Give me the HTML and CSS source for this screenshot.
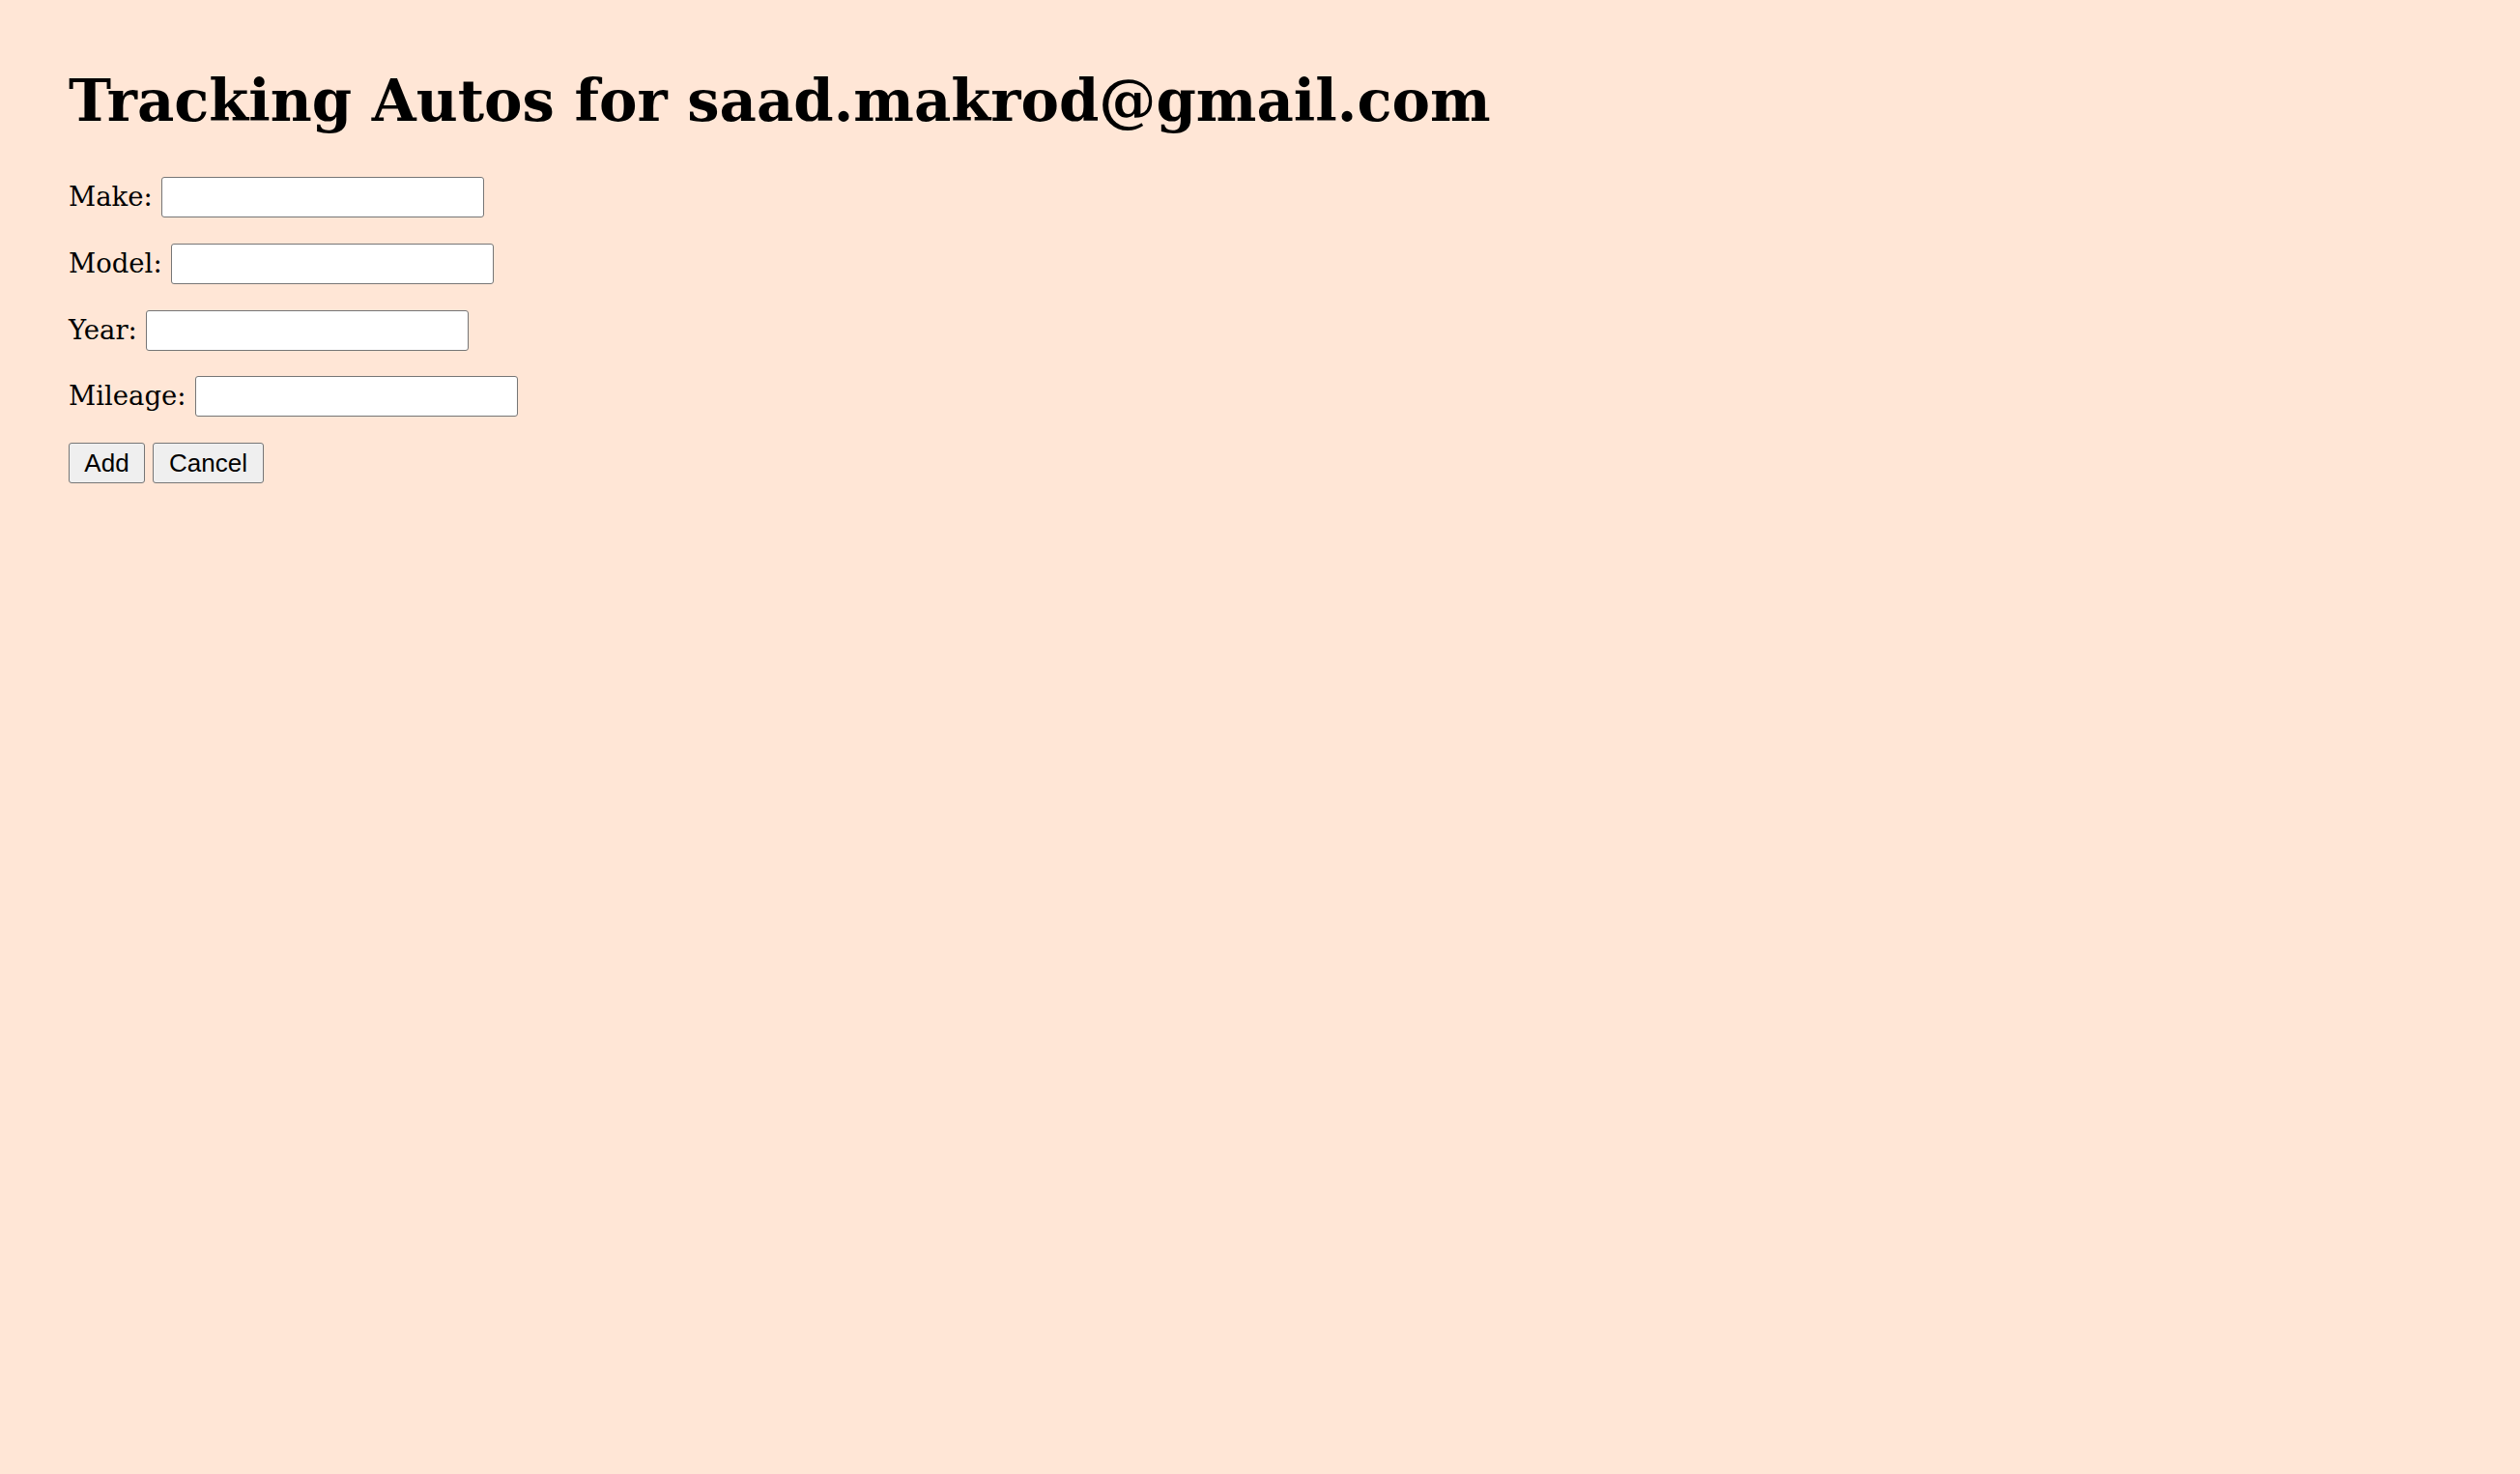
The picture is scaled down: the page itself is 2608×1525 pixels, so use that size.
FILE: index.html
```html
<!DOCTYPE html>
<html lang="en">
<head>
<meta charset="utf-8">
<title>Tracking Autos</title>
<link rel="stylesheet" href="styles.css">
</head>
<body>
<div class="page">
  <h1 class="title">Tracking Autos for saad.makrod@gmail.com</h1>
  <form class="auto-form">
    <div class="row"><label class="label" for="make">Make:</label><input class="field" type="text" id="make"></div>
    <div class="row"><label class="label" for="model">Model:</label><input class="field" type="text" id="model"></div>
    <div class="row"><label class="label" for="year">Year:</label><input class="field" type="text" id="year"></div>
    <div class="row"><label class="label" for="mileage">Mileage:</label><input class="field" type="text" id="mileage"></div>
    <div class="row buttons"><button class="btn btn-add" type="button">Add</button><button class="btn btn-cancel" type="button">Cancel</button></div>
  </form>
</div>
</body>
</html>
```

FILE: styles.css
```css
html, body {
  margin: 0;
  padding: 0;
  background: #ffe6d6;
  min-height: 100%;
}
body {
  font-family: "DejaVu Serif", Georgia, serif;
  color: #000;
}
.page {
  padding: 0 0 0 71px;
}
.title {
  font-family: "DejaVu Serif", Georgia, serif;
  font-weight: bold;
  font-size: 59.2px;
  line-height: 72px;
  margin: 68px 0 0 0;
  white-space: nowrap;
}
.auto-form {
  display: flex;
  flex-direction: column;
  gap: 26.75px;
  margin-top: 43px;
}
.row {
  display: flex;
  align-items: center;
  gap: 9px;
  height: 42px;
}
.label {
  font-size: 27.5px;
  line-height: 36px;
  position: relative;
  top: -1px;
}
.field {
  box-sizing: border-box;
  width: 334px;
  height: 42px;
  margin: 0;
  border: 1px solid #767676;
  border-radius: 3px;
  background: #fff;
  padding: 2px 4px;
}
.buttons {
  gap: 8px;
}
.btn {
  box-sizing: border-box;
  height: 42px;
  margin: 0;
  border: 1px solid #767676;
  border-radius: 3px;
  background: #efefef;
  color: #000;
  font-family: "Liberation Sans", Arial, sans-serif;
  font-size: 26px;
  padding: 0;
}
.btn-add { width: 79px; }
.btn-cancel { width: 115px; }
```
